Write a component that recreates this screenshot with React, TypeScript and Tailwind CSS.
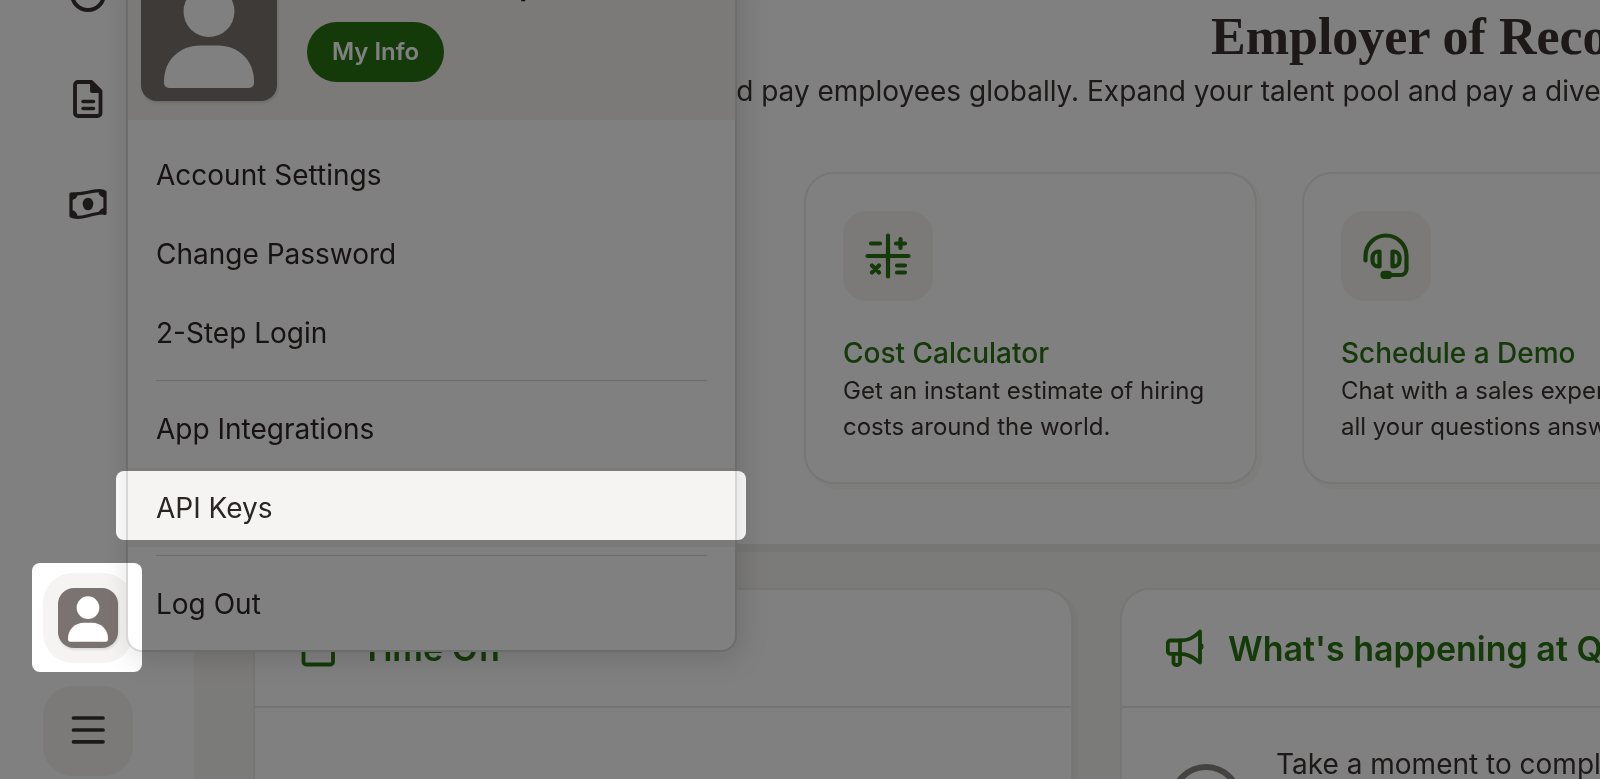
import React from 'react';

interface MenuItemProps {
    label: string;
    active?: boolean;
}

interface ToolCardProps {
    icon: React.ReactNode;
    title: string;
    lines: string[];
}

interface WidgetProps {
    icon: React.ReactNode;
    title: string;
    children?: React.ReactNode;
}

const PersonGlyph: React.FC<{ className: string }> = ({ className }) => (
    <svg viewBox="0 0 90 102" className={className} fill="#fff" aria-hidden="true">
        <circle cx="45" cy="25.5" r="25.5" />
        <path d="M0 95C0 74 16 59.500 36 59.500h18c20 0 36 14.500 36 35.500v2a5 5 0 0 1-5 5H5a5 5 0 0 1-5-5z" />
    </svg>
);

const ClockIcon = () => (
    <svg viewBox="0 0 36 36" className="size-9" fill="none" stroke="#38312f" strokeWidth="4" aria-hidden="true">
        <circle cx="18" cy="18" r="16" />
    </svg>
);

const FileIcon = () => (
    <svg viewBox="0 0 30 38" className="h-[38px] w-[30px]" fill="none" stroke="#38312f" strokeWidth="3.8" strokeLinecap="round" strokeLinejoin="round" aria-hidden="true">
        <path d="M5 2h13.500L27.500 11v22a3 3 0 0 1-3 3H5a3 3 0 0 1-3-3V5a3 3 0 0 1 3-3z" />
        <path d="M19 3v8h8z" fill="#38312f" />
        <path d="M10 21.500h10.500M10 28.500h10.500" strokeWidth="3.500" />
    </svg>
);

const CashIcon = () => (
    <svg viewBox="0 0 38 30" className="h-[30px] w-[38px]" aria-hidden="true">
        <path
            d="M2 5C4 4.200 9 5.800 19 3.300S34 1.500 36 3v21.500C34 23.500 29 24 19 26.700S4 28 2 27z"
            fill="none" stroke="#38312f" strokeWidth="3.200" strokeLinejoin="round"
        />
        <ellipse cx="19" cy="15" rx="5.300" ry="6.300" fill="#38312f" />
        <path d="M2 5l6.500.5c0 3-3 5.500-6.500 5.500zM36 3l-6.500-.5c0 3.500 3 6 6.500 6zM2 27l6.500.5c0-3.500-3-6.500-6.500-6.500zM36 25l-6.500-.5c0-3 3-5.500 6.500-5.500z" fill="#38312f" />
    </svg>
);

const MenuIcon = () => (
    <svg viewBox="0 0 34 28" className="mb-0.5 h-7 w-[34px]" stroke="#38312f" strokeWidth="3.700" strokeLinecap="round" aria-hidden="true">
        <path d="M2.500 2h29.500M2.500 14h29.500M2.500 25.800h29.500" />
    </svg>
);

const CalculatorIcon = () => (
    <svg viewBox="0 0 46 46" className="size-[46px]" fill="none" stroke="#26740f" strokeWidth="4.200" strokeLinecap="round" aria-hidden="true">
        <path d="M23 2.500v41M2.500 23h41M6 10.500h9M31 10.500h9M35.500 6v9M32 32.500h8M32 39.500h8M7 32.500l7 7M14 32.500l-7 7" />
    </svg>
);

const HeadsetIcon = () => (
    <svg viewBox="0 0 46 46" className="size-[46px]" fill="none" stroke="#26740f" strokeWidth="4.200" strokeLinecap="round" strokeLinejoin="round" aria-hidden="true">
        <path d="M2.500 27.500V23a20.500 20.500 0 0 1 41 0v13a6 6 0 0 1-6 6H24" />
        <path d="M16.500 18.500v15h-1a6 6 0 0 1-6-6v-3a6 6 0 0 1 6-6zM29.500 18.500v15h1a6 6 0 0 0 6-6v-3a6 6 0 0 0-6-6z" />
        <rect x="19.500" y="39.800" width="7.500" height="4.200" rx="2" fill="#26740f" />
    </svg>
);

const CalendarIcon = () => (
    <svg viewBox="0 0 38 38" className="size-[38px]" fill="none" stroke="#26740f" strokeWidth="3.800" strokeLinecap="round" strokeLinejoin="round" aria-hidden="true">
        <rect x="4.500" y="5" width="29.500" height="30.500" rx="2.500" />
        <path d="M4.500 13h29.500M12 2v6M26 2v6" />
    </svg>
);

const MegaphoneIcon = () => (
    <svg viewBox="0 0 38 38" className="size-[38px]" fill="none" stroke="#26740f" strokeWidth="3.800" strokeLinecap="round" strokeLinejoin="round" aria-hidden="true">
        <path d="M14 11.500H4.500a2.700 2.700 0 0 0-2.700 2.700v8a2.700 2.700 0 0 0 2.700 2.700H14c8 0 12 2.500 20 8.500V2.500c-7 7-12 9-20 9z" />
        <path d="M14 11.500V33.500a2.500 2.500 0 0 1-2.500 2.500h-1.500a2.500 2.500 0 0 1-2.500-2.500v-8.500" />
        <path d="M35.500 16.500v2" />
    </svg>
);

const MenuItem: React.FC<MenuItemProps> = ({ label, active }) => (
    <a href="#" className={`flex h-[79px] items-center px-7 text-[28px] text-[#2b2523] ${active ? 'bg-[#f5f4f2]' : ''}`}>
        {label}
    </a>
);

const MenuDivider = () => <hr className="mx-7 my-2 border-t border-[#d9d8d7]" />;

const ToolCard: React.FC<ToolCardProps> = ({ icon, title, lines }) => (
    <article className="w-[453px] shrink-0 rounded-[30px] border-2 border-[#ebebea] bg-white p-[37px] shadow-[4px_4px_0_1px_rgba(56,49,47,0.03)]">
        <div className="flex size-[90px] items-center justify-center rounded-3xl bg-[#f5f4f1]">{icon}</div>
        <h3 className="mt-8 text-[28px] leading-10 font-medium text-[#26740f]">
            <a href="#">{title}</a>
        </h3>
        <p className="text-2xl leading-9 whitespace-nowrap">
            {lines[0]}
            <br />
            {lines[1]}
        </p>
    </article>
);

const Widget: React.FC<WidgetProps> = ({ icon, title, children }) => (
    <section className="h-[400px] w-[820px] shrink-0 rounded-t-[30px] border-2 border-[#ebebea] bg-white shadow-[4px_4px_0_1px_rgba(56,49,47,0.03)]">
        <header className="flex h-[118px] items-center gap-6 border-b-2 border-[#e8e7e5] px-11">
            {icon}
            <h2 className="text-[34px] font-semibold whitespace-nowrap text-[#26740f]">{title}</h2>
        </header>
        {children}
    </section>
);

const Sidebar = () => (
    <nav className="flex w-[194px] shrink-0 flex-col bg-white pl-[43px]">
        <div className="-mt-6 flex w-[90px] flex-col items-center">
            <a href="#" aria-label="Time"><ClockIcon /></a>
            <a href="#" aria-label="Files" className="mt-[68px]"><FileIcon /></a>
            <a href="#" aria-label="Payroll" className="mt-[71px]"><CashIcon /></a>
        </div>
        <div className="mt-auto flex flex-col gap-[23px] pb-[3px]">
            <button type="button" aria-label="Account" className="flex size-[90px] items-center justify-center rounded-[30px] bg-[#f5f4f2]">
                <span className="flex size-[60px] items-end justify-center rounded-2xl bg-[#7a7370] pb-[6px] shadow-[1px_2px_2px_rgba(56,49,47,0.12)]">
                    <PersonGlyph className="h-[46px] w-10" />
                </span>
            </button>
            <button type="button" aria-label="Expand menu" className="flex size-[90px] items-center justify-center rounded-[30px] bg-[#f5f4f1]">
                <MenuIcon />
            </button>
        </div>
    </nav>
);

const AccountMenu = () => (
    <div className="absolute top-[-37px] left-[126px] w-[611px] overflow-hidden rounded-2xl border-2 border-[#d8d7d6] bg-white pb-[7px] shadow-[4px_6px_30px_rgba(0,0,0,0.14)]">
        <div className="flex gap-[30px] bg-[#f6f4f1] px-[13px] pb-[19px]">
            <span className="flex size-[136px] items-end justify-center rounded-2xl bg-[#7a7370] pb-[13px] shadow-[1px_2px_3px_rgba(56,49,47,0.15)]">
                <PersonGlyph className="h-[102px] w-[90px]" />
            </span>
            <div className="flex flex-col pt-px">
                <p className="pl-[212px] text-[32px] leading-9 font-semibold text-[#1f1b19]">p</p>
                <a href="#" className="mt-5 flex h-[60px] w-[137px] items-center justify-center rounded-full bg-[#26740f] text-2xl font-semibold text-white">
                    My Info
                </a>
            </div>
        </div>
        <div className="pt-[15px]">
            <MenuItem label="Account Settings" />
            <MenuItem label="Change Password" />
            <MenuItem label="2-Step Login" />
            <MenuDivider />
            <MenuItem label="App Integrations" />
            <MenuItem label="API Keys" active />
            <MenuDivider />
            <MenuItem label="Log Out" />
        </div>
    </div>
);

// Grey multiplies the page down to half brightness, white patches keep it as it is
const Spotlight = () => (
    <div className="pointer-events-none absolute inset-0 bg-[#808080] mix-blend-multiply">
        <div className="absolute top-[471px] left-[116px] h-[69px] w-[630px] rounded-lg bg-white" />
        <div className="absolute bottom-[107px] left-8 h-[109px] w-[110px] rounded-lg bg-white" />
    </div>
);

const App: React.FC = () => {
    return (
        <div className="relative isolate flex h-screen overflow-hidden bg-[#f6f5f2] font-['Inter',sans-serif] text-[#38312f]">
            <Sidebar />
            <main className="min-w-0 flex-1 overflow-hidden">
                <section className="border-b-8 border-[#ebebe8] bg-white pb-[60px]">
                    <h1 className="pt-[7px] pl-[1017px] font-['Liberation_Serif',serif] text-[52px] leading-[60px] font-bold whitespace-nowrap">
                        Employer of Record
                    </h1>
                    <p className="pt-1 pl-[448px] text-[28px] leading-10 whitespace-nowrap">
                        Hire and pay employees globally. Expand your talent pool and pay a diverse team.
                    </p>
                    <div className="mt-[61px] flex gap-[45px] pl-[610px]">
                        <ToolCard
                            icon={<CalculatorIcon />}
                            title="Cost Calculator"
                            lines={['Get an instant estimate of hiring', 'costs around the world.']}
                        />
                        <ToolCard
                            icon={<HeadsetIcon />}
                            title="Schedule a Demo"
                            lines={['Chat with a sales expert and get', 'all your questions answered.']}
                        />
                    </div>
                </section>
                <div className="flex gap-[47px] pt-9 pl-[59px]">
                    <Widget icon={<CalendarIcon />} title="Time Off" />
                    <Widget icon={<MegaphoneIcon />} title="What's happening at Quality">
                        <div className="flex gap-[34px] pt-9 pl-12">
                            <span className="mt-5 size-[72px] shrink-0 rounded-full border-[6px] border-[#8a8580]" />
                            <p className="text-[28px] leading-10 whitespace-nowrap">Take a moment to complete</p>
                        </div>
                    </Widget>
                </div>
            </main>
            <AccountMenu />
            <Spotlight />
        </div>
    );
};

export default App;
